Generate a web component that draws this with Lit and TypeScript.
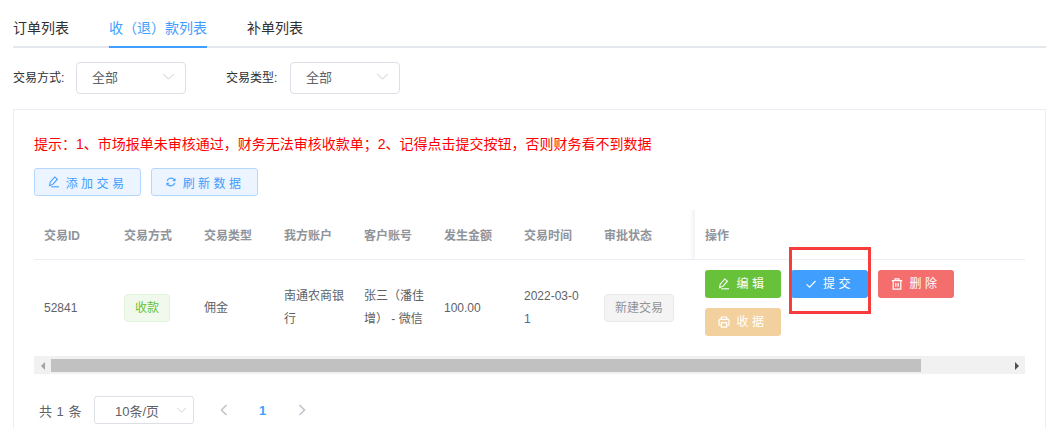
import { LitElement, html, css, svg } from "lit";
import { customElement } from "lit/decorators.js";

const pencil = svg`<svg class="ic" viewBox="0 0 12 12" fill="none" stroke="currentColor" stroke-width="1.1"><path d="M1.6 9.6 L2.2 6.2 L6.8 1 L9.4 3.2 L4.8 8.4 Z"/><path d="M5.6 10.8 H11"/><path d="M3.2 10.8 H5.6"/></svg>`;
const refresh = svg`<svg class="ic" viewBox="0 0 12 12" fill="none" stroke="currentColor" stroke-width="1.1"><path d="M2.2 5 A4 4 0 0 1 9 3.4 L9.8 4.6"/><path d="M9.8 7 A4 4 0 0 1 3 8.6 L2.2 7.4"/><path d="M10 2.6 V4.8 H7.8"/><path d="M2 9.4 V7.2 H4.2"/></svg>`;
const check = svg`<svg class="ic" viewBox="0 0 12 12" fill="none" stroke="currentColor" stroke-width="1.1"><path d="M1.5 6.3 L4.6 9.2 L10.5 3"/></svg>`;
const trash = svg`<svg class="ic" viewBox="0 0 12 12" fill="none" stroke="currentColor" stroke-width="1.2"><path d="M.8 2.6 H11.2"/><path d="M4 2.4 V.8 H8 V2.4"/><path d="M2.2 2.6 V11.2 H9.8 V2.6"/><path d="M4.8 5 V8.8 M7.2 5 V8.8"/></svg>`;
const printer = svg`<svg class="ic" viewBox="0 0 12 12" fill="none" stroke="currentColor" stroke-width="1.2"><path d="M3.4 3.4 V1 H8.6 V3.4"/><path d="M3.2 9 H1 V4.4 Q1 3.4 2 3.4 H10 Q11 3.4 11 4.4 V9 H8.8"/><path d="M3.4 6.6 H8.6 V11.2 H3.4 Z"/></svg>`;
const chevron = svg`<svg class="chev" viewBox="0 0 14 8" fill="none" stroke="#c0c4cc" stroke-width="1"><path d="M1 1 L7 7 L13 1"/></svg>`;
const arrow = (d: string) => svg`<svg class="arrow" viewBox="0 0 8 12" fill="none" stroke="#c0c4cc" stroke-width="1.6"><path d="${d}"/></svg>`;

@customElement("app-root")
export class AppRoot extends LitElement {
  static styles = css`
    :host { display: block; width: 1052px; height: 429px; overflow: hidden; background: #fff; position: relative;
      font-family: "Liberation Sans", "Noto Sans CJK SC", sans-serif; color: #606266; font-size: 12px; }
    .wrap { padding: 0 6px 0 13px; }
    .tabs { display: flex; height: 48px; border-bottom: 2px solid #e4e7ed; box-sizing: border-box; font-size: 14px; color: #303133; }
    .tab { height: 46px; line-height: 56px; box-sizing: content-box; margin-right: 40px; }
    .tab.active { color: #409eff; border-bottom: 2px solid #409eff; }
    .filters { display: flex; align-items: center; height: 32px; margin-top: 14px; color: #303133; }
    .flabel { width: 63px; white-space: nowrap; padding-bottom: 3px; box-sizing: border-box; }
    .flabel.second { width: 64px; margin-left: 40px; }
    .select { width: 110px; height: 32px; box-sizing: border-box; border: 1px solid #dcdfe6; border-radius: 4px;
      display: flex; align-items: center; justify-content: space-between; padding: 0 10px 3px 15px; font-size: 13px; color: #606266; }
    .chev { width: 13px; height: 7px; display: block; }
    .card { margin-top: 15px; border: 1px solid #ebeef5; border-bottom: none; height: 330px; box-sizing: border-box; padding: 20px; }
    .tip { color: #f00; font-size: 14px; line-height: 28px; height: 28px; white-space: nowrap; }
    .tools { display: flex; gap: 10px; margin-top: 10px; }
    .tool { width: 107px; height: 28px; box-sizing: border-box; border: 1px solid #b3d8ff; background: #ecf5ff; color: #409eff;
      border-radius: 3px; display: flex; align-items: center; justify-content: center; gap: 6px; letter-spacing: 3.4px; }
    .ic { width: 12px; height: 12px; display: block; flex: none; }
    .table { margin-top: 14px; width: 991px; }
    .row { display: flex; border-bottom: 1px solid #ebeef5; }
    .head { height: 50px; box-sizing: border-box; color: #909399; font-weight: bold; align-items: center; }
    .c { width: 80px; box-sizing: border-box; padding: 0 10px; flex: none; }
    .op { padding-left: 10px; position: relative; margin-left: 21px; align-self: stretch; display: flex; align-items: center; flex: 1; }
    .op::before { content: ""; position: absolute; left: -6px; top: 0; bottom: 0; width: 6px; background: linear-gradient(90deg, rgba(0,0,0,0), rgba(0,0,0,.05)); }
    .body { height: 96px; border-bottom: none; align-items: center; line-height: 23px; }
    .date { color: #606266; word-break: break-all; }
    .date span { color: #3f6aa5; }
    .tag { display: inline-block; height: 28px; line-height: 26px; box-sizing: border-box; padding: 0 10px; border-radius: 4px; border: 1px solid #e1f3d8; background: #f0f9eb; color: #67c23a; white-space: nowrap; }
    .tag.grey { background: #f4f4f5; border-color: #e9e9eb; color: #909399; }
    .ops { flex: 1; margin-left: 21px; padding-left: 10px; display: flex; flex-wrap: wrap; gap: 10px; align-content: flex-start; align-self: flex-start; margin-top: 10px; width: 260px; }
    .btn { width: 76px; height: 28px; border-radius: 3px; color: #fff; display: flex; align-items: center; justify-content: center; gap: 6px; letter-spacing: 3.6px; }
    .green { background: #67c23a; }
    .blue { background: #409eff; width: 77px; }
    .red { background: #f56c6c; opacity: .98; }
    .orange { background: #f3d19e; }
    .scroll { height: 18px; background: #f1f1f1; display: flex; align-items: flex-start; padding-top: 3px; box-sizing: border-box; width: 991px; }
    .sa { width: 17px; height: 13px; display: flex; align-items: center; justify-content: center; flex: none; }
    .tri { width: 0; height: 0; border-top: 4px solid transparent; border-bottom: 4px solid transparent; }
    .tri.l { border-right: 4px solid #a3a3a3; }
    .tri.r { border-left: 4px solid #505050; }
    .thumb { width: 870px; height: 13px; background: #c1c1c1; flex: none; }
    .sp { flex: 1; }
    .pager { display: flex; align-items: center; margin-top: 22px; height: 28px; padding-left: 5px; font-size: 13px; }
    .total { width: 55px; white-space: nowrap; word-spacing: 1px; }
    .psel { width: 100px; height: 28px; box-sizing: border-box; border: 1px solid #dcdfe6; border-radius: 3px; display: flex; align-items: center; justify-content: space-between; padding: 0 6px 0 20px; }
    .psel .chev { width: 11px; height: 6px; }
    .arrow { width: 8px; height: 12px; display: block; }
    .one { color: #409eff; font-weight: bold; font-size: 13px; margin: 0 32px 0 31px; }
    .pa { margin-left: 26px; }
    .mark { position: absolute; left: 789px; top: 247px; width: 82px; height: 67px; box-sizing: border-box; border: 3px solid #f73c3c; pointer-events: none; }
  `;

  render() {
    return html`
      <div class="wrap">
        <div class="tabs">
          <div class="tab">订单列表</div>
          <div class="tab active">收（退）款列表</div>
          <div class="tab">补单列表</div>
        </div>
        <div class="filters">
          <div class="flabel">交易方式:</div>
          <div class="select"><span>全部</span>${chevron}</div>
          <div class="flabel second">交易类型:</div>
          <div class="select"><span>全部</span>${chevron}</div>
        </div>
        <div class="card">
          <div class="tip">提示：1、市场报单未审核通过，财务无法审核收款单；2、记得点击提交按钮，否则财务看不到数据</div>
          <div class="tools">
            <div class="tool">${pencil}<span>添加交易</span></div>
            <div class="tool">${refresh}<span>刷新数据</span></div>
          </div>
          <div class="table">
            <div class="row head">
              <div class="c">交易ID</div><div class="c">交易方式</div><div class="c">交易类型</div><div class="c">我方账户</div>
              <div class="c">客户账号</div><div class="c">发生金额</div><div class="c">交易时间</div><div class="c">审批状态</div>
              <div class="op">操作</div>
            </div>
            <div class="row body">
              <div class="c">52841</div>
              <div class="c"><span class="tag">收款</span></div>
              <div class="c">佣金</div>
              <div class="c">南通农商银行</div>
              <div class="c">张三（潘佳增） - 微信</div>
              <div class="c">100.00</div>
              <div class="c date">2022-03-0<span>1</span></div>
              <div class="c"><span class="tag grey">新建交易</span></div>
              <div class="ops">
                <div class="btn green">${pencil}<span>编辑</span></div>
                <div class="btn blue">${check}<span>提交</span></div>
                <div class="btn red">${trash}<span>删除</span></div>
                <div class="btn orange">${printer}<span>收据</span></div>
              </div>
            </div>
            <div class="scroll">
              <div class="sa"><div class="tri l"></div></div>
              <div class="thumb"></div>
              <div class="sp"></div>
              <div class="sa"><div class="tri r"></div></div>
            </div>
          </div>
          <div class="pager">
            <div class="total">共 1 条</div>
            <div class="psel"><span>10条/页</span>${chevron}</div>
            <div class="pa">${arrow("M6.5 1 L1.5 6 L6.5 11")}</div>
            <div class="one">1</div>
            ${arrow("M1.5 1 L6.5 6 L1.5 11")}
          </div>
        </div>
      </div>
      <div class="mark"></div>
    `;
  }
}
